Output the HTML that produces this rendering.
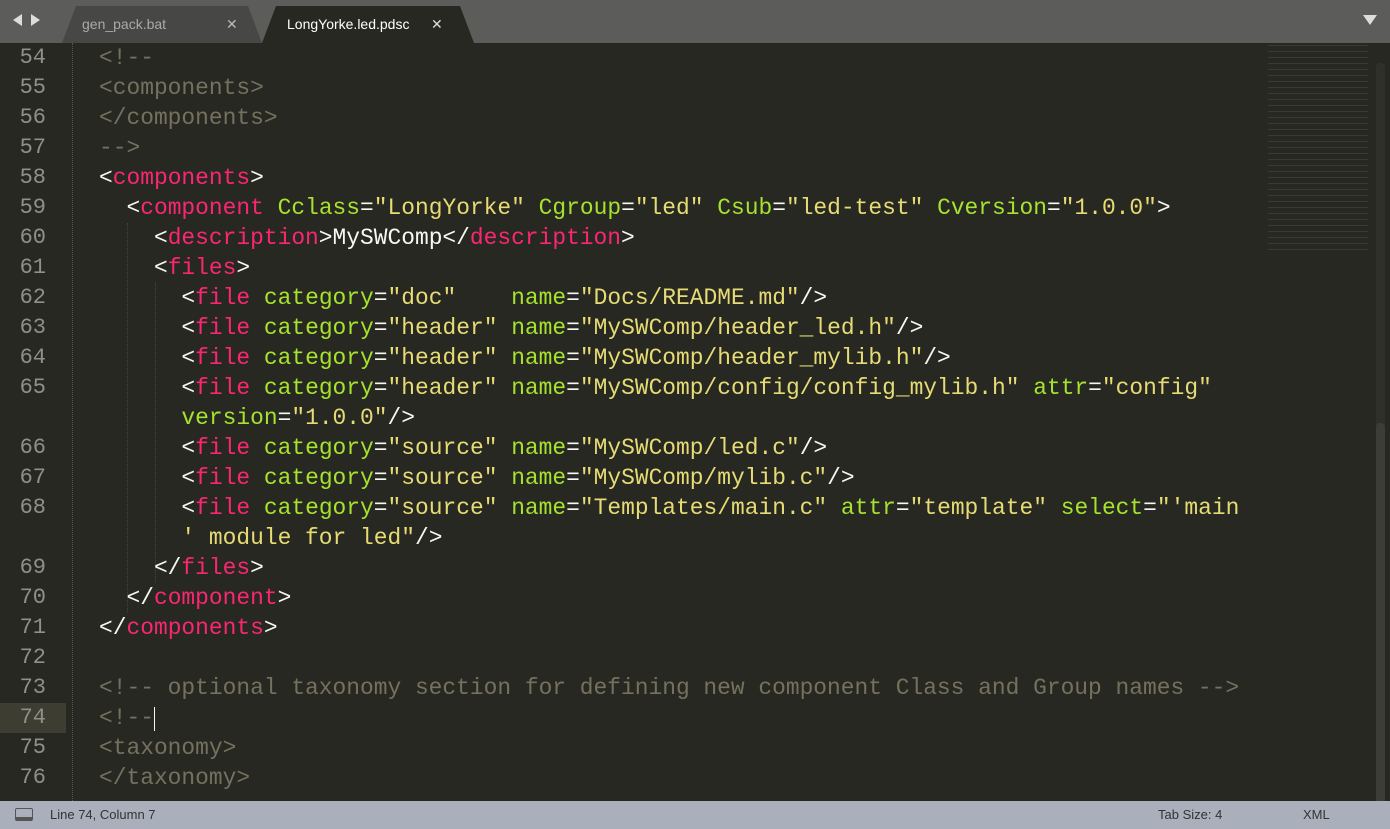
<!DOCTYPE html>
<html><head><style>
body{margin:0;width:1390px;height:829px;background:#272822;overflow:hidden;position:relative;font-family:"Liberation Sans",sans-serif}
#tabs{position:absolute;left:0;top:0;width:1390px;height:43px;background:#5c5c5a}
.tab{position:absolute;top:6px;height:37px;border-radius:6px 6px 0 0;font-size:14px;line-height:37px}
.code{position:absolute;left:0;top:43px;width:1390px;font-family:"Liberation Mono",monospace;font-size:22.9px}
.row{position:absolute;height:30px;line-height:30px;white-space:pre}
.ln{position:absolute;left:0;width:46px;text-align:right;color:#90908a;font-family:"Liberation Mono",monospace;font-size:22px;line-height:30px}
.c{color:#75715e}.t{color:#f92672}.a{color:#a6e22e}.s{color:#e6db74}.w{color:#f8f8f2}
#status{position:absolute;left:0;top:801px;width:1390px;height:28px;background:#a9b0bc;font-size:13px;color:#333;line-height:28px}
</style></head><body>
<div id="tabs">
<div style="position:absolute;left:13px;top:14px;width:0;height:0;border-top:6px solid transparent;border-bottom:6px solid transparent;border-right:9px solid #ddd"></div>
<div style="position:absolute;left:31px;top:14px;width:0;height:0;border-top:6px solid transparent;border-bottom:6px solid transparent;border-left:9px solid #ddd"></div>
<div class="tab" style="left:62px;width:200px;background:#474745;color:#aaa;padding-left:20px;box-sizing:border-box;clip-path:polygon(0 100%,14px 0,calc(100% - 14px) 0,100% 100%)">gen_pack.bat<span style="position:absolute;left:164px;color:#bbb">✕</span></div>
<div class="tab" style="left:262px;width:212px;background:#272822;color:#fff;padding-left:25px;box-sizing:border-box;clip-path:polygon(0 100%,14px 0,calc(100% - 14px) 0,100% 100%)">LongYorke.led.pdsc<span style="position:absolute;left:169px;color:#ddd">✕</span></div>
<div style="position:absolute;left:1363px;top:15px;width:0;height:0;border-left:7px solid transparent;border-right:7px solid transparent;border-top:10px solid #ddd"></div>
</div>
<div class="code">
<div style="position:absolute;left:0;top:660px;width:66px;height:30px;background:#3e3d32"></div>
<div style="position:absolute;left:72px;top:0;height:758px;border-left:1px dotted #555"></div>
<div style="position:absolute;left:127px;top:180px;height:390px;border-left:1px dotted #444"></div>
<div style="position:absolute;left:155px;top:240px;height:300px;border-left:1px dotted #444"></div>
<div style="position:absolute;left:154px;top:664px;width:1px;height:24px;background:#f8f8f0"></div>
<div style="position:absolute;left:1376px;top:20px;width:9px;height:740px;background:#2f302a;border-radius:4px"></div>
<div style="position:absolute;left:1376px;top:380px;width:9px;height:380px;background:#3c3d37;border-radius:4px"></div>
<div style="position:absolute;left:1268px;top:0;width:100px;height:210px;opacity:.25;background:repeating-linear-gradient(#272822 0 2px,#75715e 2px 3px,#272822 3px 6px)"></div>
<div class="ln" style="top:0">54</div><div class="row c" style="left:99px;top:0">&lt;!--</div>
<div class="ln" style="top:30px">55</div><div class="row c" style="left:99px;top:30px">&lt;components&gt;</div>
<div class="ln" style="top:60px">56</div><div class="row c" style="left:99px;top:60px">&lt;/components&gt;</div>
<div class="ln" style="top:90px">57</div><div class="row c" style="left:99px;top:90px">--&gt;</div>
<div class="ln" style="top:120px">58</div><div class="row w" style="left:99px;top:120px">&lt;<span class="t">components</span>&gt;</div>
<div class="ln" style="top:150px">59</div><div class="row w" style="left:99px;top:150px">  &lt;<span class="t">component</span> <span class="a">Cclass</span>=<span class="s">"LongYorke"</span> <span class="a">Cgroup</span>=<span class="s">"led"</span> <span class="a">Csub</span>=<span class="s">"led-test"</span> <span class="a">Cversion</span>=<span class="s">"1.0.0"</span>&gt;</div>
<div class="ln" style="top:180px">60</div><div class="row w" style="left:99px;top:180px">    &lt;<span class="t">description</span>&gt;MySWComp&lt;/<span class="t">description</span>&gt;</div>
<div class="ln" style="top:210px">61</div><div class="row w" style="left:99px;top:210px">    &lt;<span class="t">files</span>&gt;</div>
<div class="ln" style="top:240px">62</div><div class="row w" style="left:99px;top:240px">      &lt;<span class="t">file</span> <span class="a">category</span>=<span class="s">"doc"</span>    <span class="a">name</span>=<span class="s">"Docs/README.md"</span>/&gt;</div>
<div class="ln" style="top:270px">63</div><div class="row w" style="left:99px;top:270px">      &lt;<span class="t">file</span> <span class="a">category</span>=<span class="s">"header"</span> <span class="a">name</span>=<span class="s">"MySWComp/header_led.h"</span>/&gt;</div>
<div class="ln" style="top:300px">64</div><div class="row w" style="left:99px;top:300px">      &lt;<span class="t">file</span> <span class="a">category</span>=<span class="s">"header"</span> <span class="a">name</span>=<span class="s">"MySWComp/header_mylib.h"</span>/&gt;</div>
<div class="ln" style="top:330px">65</div><div class="row w" style="left:99px;top:330px">      &lt;<span class="t">file</span> <span class="a">category</span>=<span class="s">"header"</span> <span class="a">name</span>=<span class="s">"MySWComp/config/config_mylib.h"</span> <span class="a">attr</span>=<span class="s">"config"</span></div>
<div class="row w" style="left:99px;top:360px">      <span class="a">version</span>=<span class="s">"1.0.0"</span>/&gt;</div>
<div class="ln" style="top:390px">66</div><div class="row w" style="left:99px;top:390px">      &lt;<span class="t">file</span> <span class="a">category</span>=<span class="s">"source"</span> <span class="a">name</span>=<span class="s">"MySWComp/led.c"</span>/&gt;</div>
<div class="ln" style="top:420px">67</div><div class="row w" style="left:99px;top:420px">      &lt;<span class="t">file</span> <span class="a">category</span>=<span class="s">"source"</span> <span class="a">name</span>=<span class="s">"MySWComp/mylib.c"</span>/&gt;</div>
<div class="ln" style="top:450px">68</div><div class="row w" style="left:99px;top:450px">      &lt;<span class="t">file</span> <span class="a">category</span>=<span class="s">"source"</span> <span class="a">name</span>=<span class="s">"Templates/main.c"</span> <span class="a">attr</span>=<span class="s">"template"</span> <span class="a">select</span>=<span class="s">"'main</span></div>
<div class="row w" style="left:99px;top:480px">      <span class="s">' module for led"</span>/&gt;</div>
<div class="ln" style="top:510px">69</div><div class="row w" style="left:99px;top:510px">    &lt;/<span class="t">files</span>&gt;</div>
<div class="ln" style="top:540px">70</div><div class="row w" style="left:99px;top:540px">  &lt;/<span class="t">component</span>&gt;</div>
<div class="ln" style="top:570px">71</div><div class="row w" style="left:99px;top:570px">&lt;/<span class="t">components</span>&gt;</div>
<div class="ln" style="top:600px">72</div>
<div class="ln" style="top:630px">73</div><div class="row c" style="left:99px;top:630px">&lt;!-- optional taxonomy section for defining new component Class and Group names --&gt;</div>
<div class="ln" style="top:660px">74</div><div class="row c" style="left:99px;top:660px">&lt;!--</div>
<div class="ln" style="top:690px">75</div><div class="row c" style="left:99px;top:690px">&lt;taxonomy&gt;</div>
<div class="ln" style="top:720px">76</div><div class="row c" style="left:99px;top:720px">&lt;/taxonomy&gt;</div>
</div>
<div id="status">
<div style="position:absolute;left:15px;top:7px;width:18px;height:13px;border:1px solid #555;border-bottom:4px solid #555;border-radius:2px;box-sizing:border-box"></div>
<span style="position:absolute;left:50px">Line 74, Column 7</span>
<span style="position:absolute;left:1158px">Tab Size: 4</span>
<span style="position:absolute;left:1303px">XML</span>
</div>
</body></html>
